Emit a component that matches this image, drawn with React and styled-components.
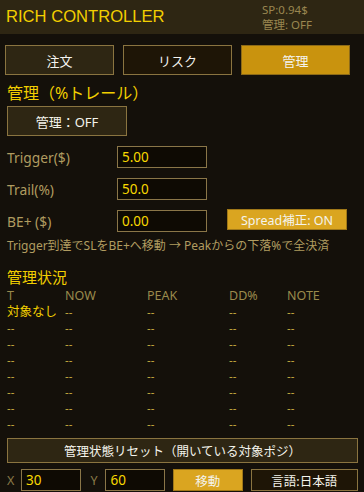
import styled, { createGlobalStyle } from "styled-components";

const GlobalStyle = createGlobalStyle`
  html, body {
    margin: 0;
    padding: 0;
    background: #14100a;
  }
  body {
    font-family: "Noto Sans", "Noto Sans CJK JP", sans-serif;
  }
`;

const Panel = styled.div`
  width: 364px;
  height: 492px;
  background: #14100a;
  box-sizing: border-box;
  overflow: hidden;
`;

const Header = styled.div`
  height: 34px;
  background: #2e2613;
  display: flex;
  justify-content: space-between;
  align-items: center;
  padding: 0 6px;
`;

const AppTitle = styled.div`
  font-family: "Liberation Sans", "Noto Sans CJK JP", sans-serif;
  font-size: 16.6px;
  color: #f2cf00;
`;

const Status = styled.div`
  width: 96px;
  display: flex;
  flex-direction: column;
  gap: 0;
  font-size: 11.5px;
  line-height: 15.5px;
  color: #9a8650;
`;

const Tabs = styled.div`
  display: grid;
  grid-template-columns: repeat(3, 109px);
  gap: 9px;
  padding: 11px 5px 0;
`;

const Tab = styled.div`
  height: 30px;
  box-sizing: border-box;
  display: flex;
  align-items: center;
  justify-content: center;
  font-size: 13px;
  color: #f4f4f0;
  border: 1px solid ${(p) => (p.$active ? "#8c6a18" : "#8a7440")};
  background: ${(p) => (p.$active ? "#c9930e" : p.$dark ? "#1e1506" : "#2e2613")};
`;

const Body = styled.div`
  padding: 6px 7px 0;
`;

const Heading = styled.div`
  font-size: 16px;
  line-height: 20px;
  color: #f2cf00;
`;

const Button = styled.div`
  box-sizing: border-box;
  width: ${(p) => p.$w};
  height: ${(p) => p.$h}px;
  display: flex;
  align-items: center;
  justify-content: center;
  font-size: ${(p) => p.$fs || 13}px;
  color: #f4f4ec;
  background: ${(p) => (p.$gold ? "#daa520" : p.$dark ? "#1e1506" : "#2e2613")};
  border: 1px solid ${(p) => (p.$gold ? "#a07818" : "#8a7440")};
`;

const Form = styled.div`
  display: flex;
  flex-direction: column;
  gap: 10px;
  margin-top: 10px;
`;

const FieldRow = styled.div`
  display: flex;
  align-items: center;
  height: 22px;
`;

const Label = styled.div`
  width: 110px;
  font-size: 13.8px;
  color: #b09c60;
`;

const Input = styled.div`
  box-sizing: border-box;
  width: ${(p) => p.$w || 90}px;
  height: 22px;
  background: #0e0a03;
  border: 1px solid #8a7648;
  color: #f8d800;
  font-size: 13.5px;
  line-height: 20px;
  padding-left: 4px;
`;

const SpreadButton = styled(Button)`
  margin-left: 20px;
  margin-top: -3px;
`;

const Note = styled.div`
  font-size: 12px;
  line-height: 16px;
  color: #b09c60;
  margin-top: 6px;
  white-space: nowrap;
`;

const StatusHeading = styled(Heading)`
  margin-top: 13px;
  font-size: 15px;
  line-height: 20px;
`;

const Table = styled.div`
  display: grid;
  grid-template-columns: 58px 82px 82px 58px 1fr;
  grid-auto-rows: 16px;
  line-height: 16px;
  margin-top: 1px;
`;

const HeadCell = styled.div`
  color: #9a8a4c;
  font-size: 12.5px;
`;

const Cell = styled.div`
  color: ${(p) => (p.$hi ? "#f2cf00" : "#c8ac40")};
  font-size: ${(p) => (p.$hi ? 12.5 : 11.5)}px;
`;

const Footer = styled.div`
  padding: 6px 6px 0 7px;
  display: flex;
  flex-direction: column;
  gap: 6px;
`;

const BottomRow = styled.div`
  display: flex;
  align-items: center;
  height: 22px;
`;

const AxisLabel = styled.div`
  width: ${(p) => p.$w}px;
  font-size: 12.5px;
  color: #8a7a48;
`;

const Gap = styled.div`
  width: ${(p) => p.$w}px;
`;

const columns = ["T", "NOW", "PEAK", "DD%", "NOTE"];
const rows = Array.from({ length: 8 }, (_, i) => (i === 0 ? "対象なし" : "--"));

export default function App() {
  return (
    <Panel>
      <GlobalStyle />
      <Header>
        <AppTitle>RICH CONTROLLER</AppTitle>
        <Status>
          <div>SP:0.94$</div>
          <div>管理: OFF</div>
        </Status>
      </Header>

      <Tabs>
        <Tab>注文</Tab>
        <Tab $dark>リスク</Tab>
        <Tab $active>管理</Tab>
      </Tabs>

      <Body>
        <Heading style={{ marginTop: 2 }}>管理（%トレール）</Heading>
        <Button $w="120px" $h={30} style={{ marginTop: 3 }}>
          管理：OFF
        </Button>

        <Form>
          <FieldRow>
            <Label>Trigger($)</Label>
            <Input>5.00</Input>
          </FieldRow>
          <FieldRow>
            <Label>Trail(%)</Label>
            <Input>50.0</Input>
          </FieldRow>
          <FieldRow>
            <Label>BE+ ($)</Label>
            <Input>0.00</Input>
            <SpreadButton $gold $w="120px" $h={21} $fs={12.5}>
              Spread補正: ON
            </SpreadButton>
          </FieldRow>
        </Form>

        <Note>Trigger到達でSLをBE+へ移動 → Peakからの下落%で全決済</Note>

        <StatusHeading>管理状況</StatusHeading>
        <Table>
          {columns.map((c) => (
            <HeadCell key={c}>{c}</HeadCell>
          ))}
          {rows.map((first, i) =>
            [first, "--", "--", "--", "--"].map((v, j) => (
              <Cell key={`${i}-${j}`} $hi={i === 0 && j === 0}>
                {v}
              </Cell>
            ))
          )}
        </Table>
      </Body>

      <Footer>
        <Button $w="100%" $h={25} $fs={12.5}>
          管理状態リセット（開いている対象ポジ）
        </Button>
        <BottomRow>
          <AxisLabel $w={14}>X</AxisLabel>
          <Input $w={60}>30</Input>
          <Gap $w={10} />
          <AxisLabel $w={15}>Y</AxisLabel>
          <Input $w={60}>60</Input>
          <Gap $w={8} />
          <Button $gold $w="70px" $h={22} $fs={12.5}>
            移動
          </Button>
          <Gap $w={8} />
          <Button $dark $w="108px" $h={22} $fs={12.5}>
            言語:日本語
          </Button>
        </BottomRow>
      </Footer>
    </Panel>
  );
}
